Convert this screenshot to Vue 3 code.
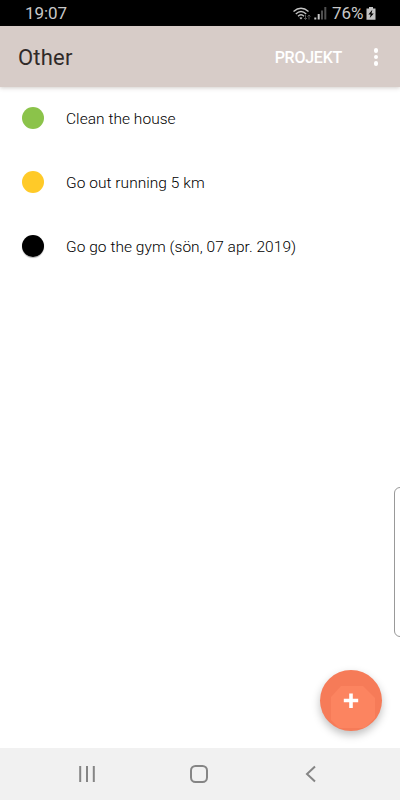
<template>
  <div class="screen">

    <!-- ===== Status bar ===== -->
    <header class="status-bar">
      <span class="clock">19:07</span>

      <div class="status-icons">
        <svg class="wifi" width="18" height="14" viewBox="0 0 18 14" fill="none">
          <g stroke="#c4c4c4" stroke-width="1.4">
            <path d="M.5 4.500Q8 -2 15.500 4.500" />
            <path d="M2.800 6.900Q8 2.300 13.200 6.900" />
            <path d="M5 9.200Q8 6.500 11 9.200" />
          </g>
          <path d="M6.300 10.800Q8 9.500 9.500 10.800L8 12.600Z" fill="#c4c4c4" />
          <path d="M12.500 8v4.500M11 11l1.500 1.500L14 11M16 12.500V8M14.500 9.500L16 8l1.500 1.500" stroke="#555" />
        </svg>

        <svg class="signal" width="13" height="13" viewBox="0 0 13 13">
          <path d="M.3 10.500h2v2h-2z" fill="#c8c8c8" />
          <path d="M3.700 7h2v5.500h-2z" fill="#c8c8c8" />
          <path d="M7 3.500h2v9H7zM10.300 0h2v12.500h-2z" fill="#505050" />
        </svg>

        <span class="percent">76%</span>

        <svg class="battery" width="10" height="13" viewBox="0 0 10 13">
          <path d="M3 0h4v1.500h2.500v11.300H.5V1.500H3z" fill="#c4c4c4" />
          <path d="M6.300 2.800L2.400 7.500h2.300l-1 3.500L7.800 6.500H5.500z" fill="#000" />
        </svg>
      </div>
    </header>

    <!-- ===== App bar ===== -->
    <div class="app-bar">
      <h1 class="title">Other</h1>
      <button class="project-btn">PROJEKT</button>
      <button class="more-btn" aria-label="Mer">
        <i></i><i></i><i></i>
      </button>
    </div>

    <!-- ===== Tasks ===== -->
    <main class="content">
      <ul class="task-list">
        <li v-for="task in tasks" :key="task.text">
          <span class="dot" :class="task.color"></span>
          <span class="task-text">{{ task.text }}</span>
        </li>
      </ul>

      <!-- edge panel handle -->
      <div class="edge-handle"></div>

      <button class="fab" aria-label="Ny">
        <svg width="62" height="62" viewBox="0 0 62 62">
          <path d="M21 16H43L55 28v20L45 58H19L11 50V27z" fill="#fc8460" />
          <path d="M31 23.500v14.500M23.800 30.500h14.400" stroke="#fff" stroke-width="3.600" />
        </svg>
      </button>
    </main>

    <!-- ===== Navigation ===== -->
    <nav class="nav-bar">
      <svg width="18" height="18" viewBox="0 0 18 18">
        <path d="M2.200 1v16M9 1v16M15.800 1v16" stroke="#858585" stroke-width="2" />
      </svg>
      <svg width="20" height="20" viewBox="0 0 20 20">
        <rect x="2" y="2" width="16" height="16" rx="4.500" fill="none" stroke="#858585" stroke-width="2" />
      </svg>
      <svg width="18" height="18" viewBox="0 0 18 18">
        <path d="M13 1.500L5 9l8 7.500" fill="none" stroke="#858585" stroke-width="2" />
      </svg>
    </nav>

  </div>
</template>

<script setup>
const tasks = [
  { text: 'Clean the house', color: 'green' },
  { text: 'Go out running 5 km', color: 'yellow' },
  { text: 'Go go the gym (sön, 07 apr. 2019)', color: 'black' }
]
</script>

<style>
body {
  margin: 0;
}
</style>

<style scoped>
.screen {
  display: flex;
  flex-direction: column;
  height: 800px;
  overflow: hidden;
  background: #fff;
  font-family: Roboto, sans-serif;
}

button {
  padding: 0;
  border: 0;
  background: none;
  font-family: inherit;
}

/* status bar */
.status-bar {
  display: flex;
  align-items: center;
  justify-content: space-between;
  box-sizing: border-box;
  height: 26px;
  padding: 1px 24px 0 25px;
  background: #000;
  color: #c8c8c8;
  font-size: 17px;
  line-height: 19px;
}

.clock {
  letter-spacing: -0.1px;
}

.status-icons {
  display: flex;
  align-items: center;
}

.signal {
  margin: 0 5px 0 3px;
}

.percent {
  margin-right: 2.5px;
}

/* app bar */
.app-bar {
  position: relative;
  display: flex;
  align-items: center;
  box-sizing: border-box;
  height: 61px;
  padding: 1px 15px 0 18px;
  background: #d7ccc8;
  box-shadow: 0 1px 4px rgba(80, 65, 50, 0.25);
}

.title {
  flex: 1;
  margin: 0;
  color: #302a29;
  font-size: 22px;
  font-weight: 400;
  letter-spacing: 0.2px;
}

.project-btn {
  color: #fff;
  font-size: 16px;
  font-weight: 500;
  letter-spacing: -0.25px;
}

.more-btn {
  display: flex;
  flex-direction: column;
  align-items: center;
  gap: 2px;
  width: 18px;
  margin-left: 25px;
}

.more-btn i {
  width: 4.500px;
  height: 4.500px;
  border-radius: 50%;
  background: #fff;
}

/* content */
.content {
  position: relative;
  flex: 1;
}

.task-list {
  list-style: none;
  margin: 0;
  padding: 0;
}

.task-list li {
  display: flex;
  align-items: center;
  gap: 22px;
  height: 64px;
  padding-left: 22px;
}

.dot {
  width: 22px;
  height: 22px;
  margin-bottom: 2px;
  border-radius: 50%;
}

.green {
  background: #8bc34a;
}

.yellow {
  background: #ffca28;
}

.black {
  background: #000;
  box-shadow: 0 1px 1px rgba(0, 0, 0, 0.3);
}

.task-text {
  color: #000;
  font-size: 15.5px;
  font-weight: 350;
  letter-spacing: 0.04px;
}

.edge-handle {
  position: absolute;
  right: -8px;
  bottom: 111px;
  box-sizing: border-box;
  width: 14px;
  height: 150px;
  border: 1px solid #999;
  border-radius: 6px;
  background: #fff;
}

.fab {
  position: absolute;
  right: 18px;
  bottom: 17px;
  width: 62px;
  height: 61px;
  overflow: hidden;
  border-radius: 50%;
  background: #f67b58;
  box-shadow: 0 4px 8px rgba(0, 0, 0, 0.25);
}

.fab svg {
  display: block;
}

/* navigation */
.nav-bar {
  display: flex;
  align-items: center;
  justify-content: space-between;
  height: 52px;
  padding: 0 80px 0 78px;
  background: #f1f1f1;
}
</style>
